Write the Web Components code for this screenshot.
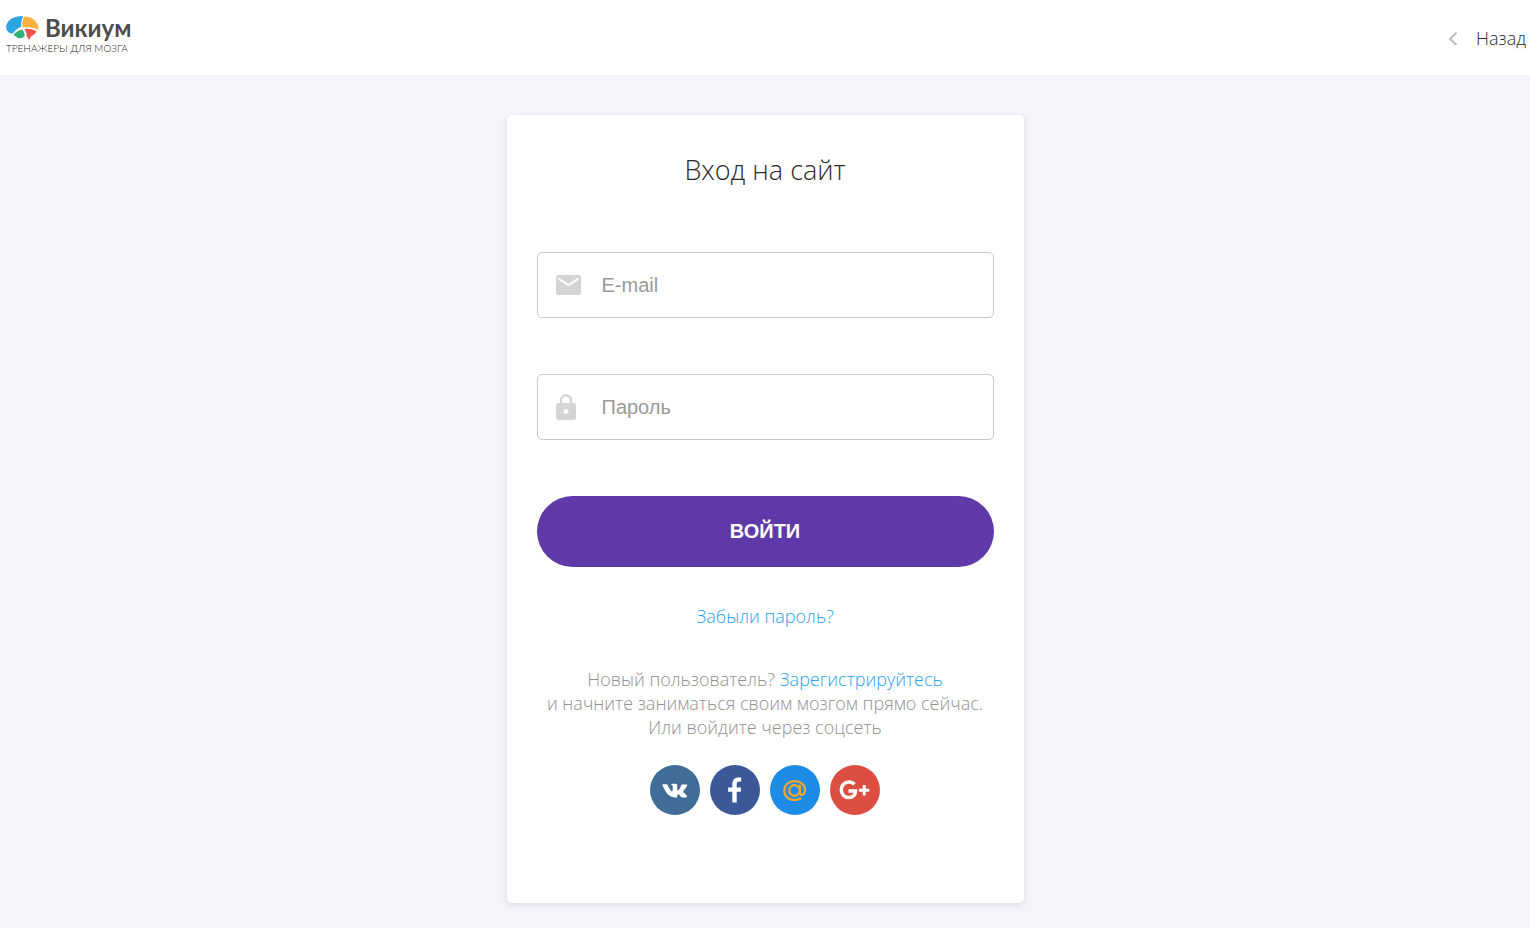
<!DOCTYPE html>
<html lang="ru">
<head>
<meta charset="utf-8">
<meta name="viewport" content="width=device-width, initial-scale=1">
<title>Викиум — вход на сайт</title>
<style>
  html { min-height: 100%; background: #f6f4fa; }
  body { margin: 0; font-family: "Open Sans", "Noto Sans", sans-serif; font-weight: 350; font-size: 18px; color: #2b2b2b; }
</style>
</head>
<body>
<wk-page>
  <wk-header slot="header"></wk-header>
  <wk-login-card></wk-login-card>
</wk-page>
<script>
  class Base extends HTMLElement {
    constructor() {
      super();
      this.attachShadow({ mode: 'open' });
    }
    connectedCallback() {
      this.shadowRoot.innerHTML = `<style>*{box-sizing:border-box}${this.css()}</style>${this.html()}`;
    }
  }

  customElements.define('wk-logo', class extends Base {
    css() { return `
      :host { display: block; }
      a { display: block; color: #4d4d4d; text-decoration: none; white-space: nowrap; }
      .top { display: flex; align-items: center; gap: 6px; height: 28px; }
      svg { display: block; width: 33px; height: 24px; }
      .name { font: 700 24px/28px Lato, sans-serif; }
      .tag { display: block; font: 300 10px/12px Lato, sans-serif; color: #222; }
    `; }
    html() { return `
      <a href="#">
        <span class="top">
          <svg viewBox="0 0 33 24" aria-hidden="true">
            <path fill="#2aa5e0" d="M17.500 0.500C15.500 3 15 7 15.300 10.500C12 11.700 9.400 14.200 7.200 17C5.500 18.300 .8 16.500 .2 12C-.4 5.600 7 -1 17.500 .500Z"/>
            <path fill="#fbb040" d="M18.500.500C26 .200 32 5.600 32.500 12.300C32.500 13.600 31.800 13.900 30.600 13.300C26.500 11.300 22 11.200 16.500 11.400C16.100 7.500 16.300 3 18.500.500Z"/>
            <path fill="#33b07a" d="M8 18.300C9.500 16 13 13.900 16.300 13.400C18 15.700 19 18 18.500 20.300C16.500 22.500 13.800 22.600 11.500 22C11 20.500 9.700 20.200 8.500 20.200Z"/>
            <path fill="#ef5350" d="M18.300 12.900C22.500 12.200 27.500 13 30.300 15.200C29.800 17.700 27 19.300 25 20.300L23.300 23.800C21.500 22.800 21.800 21.500 20.700 20C20.800 17.200 19.500 14.800 18.300 12.900Z"/>
          </svg>
          <span class="name">Викиум</span>
        </span>
        <span class="tag">ТРЕНАЖЕРЫ ДЛЯ МОЗГА</span>
      </a>`; }
  });

  customElements.define('wk-header', class extends Base {
    css() { return `
      :host { display: block; background: #fff; }
      header { display: flex; justify-content: space-between; height: 75px; padding: 14px 4px 0 6px; }
      .back { display: flex; align-items: center; gap: 18px; height: 48px; color: #2b2b2b; text-decoration: none; font-size: 18px; }
      svg { display: block; width: 10px; height: 14px; }
    `; }
    html() { return `
      <header>
        <wk-logo></wk-logo>
        <a class="back" href="#"><svg viewBox="0 0 10 14" aria-hidden="true"><path d="M8.500 1.500L2 8l6.500 6" fill="none" stroke="#bdbdbd" stroke-width="2"/></svg><span>Назад</span></a>
      </header>`; }
  });

  customElements.define('wk-page', class extends Base {
    css() { return `
      :host { display: block; }
      main { padding: 40px 16px 25px; }
    `; }
    html() { return `<slot name="header"></slot><main><slot></slot></main>`; }
  });

  const fieldIcons = {
    mail: `<svg width="25" height="20" viewBox="0 0 25 20"><path fill="#d4d4d4" d="M2.500 0h20A2.500 2.500 0 0 1 25 2.500v15a2.500 2.500 0 0 1-2.500 2.500h-20A2.500 2.500 0 0 1 0 17.500v-15A2.500 2.500 0 0 1 2.500 0ZM22.500 5V2.500l-10 6.300-10-6.300V5l10 6.200Z"/></svg>`,
    lock: `<svg width="20" height="26" viewBox="0 0 20 26"><path fill="#d4d4d4" fill-rule="evenodd" d="M3.800 9V6.200a6.200 6.200 0 0 1 12.400 0V9h1.300A2.500 2.500 0 0 1 20 11.500v12a2.500 2.500 0 0 1-2.500 2.500h-15A2.500 2.500 0 0 1 0 23.500v-12A2.500 2.500 0 0 1 2.500 9ZM6.200 9h7.600V6.200a3.800 3.800 0 0 0-7.600 0ZM10 15a2.500 2.500 0 1 0 0 5 2.500 2.500 0 0 0 0-5Z"/></svg>`
  };

  customElements.define('wk-field', class extends Base {
    css() { return `
      :host { display: block; }
      label { display: grid; grid-template-columns: 46px 1fr; align-items: center; height: 66px; padding: 0 18px; border: 1px solid #c9c9c9; border-radius: 5px; background: #fff; }
      svg { display: block; }
      input { width: 100%; height: 60px; padding: 0; border: 0; outline: 0; background: none; color: #2b2b2b; font: 400 20px "Liberation Sans", Arial, sans-serif; }
      input::placeholder { color: #999; opacity: 1; }
    `; }
    html() {
      const name = this.getAttribute('label');
      return `<label>${fieldIcons[this.getAttribute('icon')]}<input type="${this.getAttribute('type')}" placeholder="${name}" aria-label="${name}"></label>`;
    }
  });

  const socialIcons = {
    vk: `<path fill="#fff" transform="translate(2.300 2.300) scale(.92)" d="M24.600 32.800h1.600s.5-.1.700-.300c.2-.2.200-.7.200-.7s0-2.100.9-2.400c1-.3 2.200 2 3.500 2.900 1 .7 1.800.5 1.800.5l3.500 0s1.800-.1.900-1.500c-.1-.1-.5-1-2.600-3-2.200-2-1.900-1.700.8-5.200 1.600-2.200 2.300-3.500 2.100-4.100-.2-.5-1.500-.4-1.500-.4l-3.900 0s-.3 0-.5.100c-.2.100-.4.400-.4.400s-.6 1.700-1.400 3.100c-1.700 2.900-2.400 3-2.700 2.900-.7-.4-.5-1.700-.5-2.600 0-2.900.4-4.100-.9-4.400-.4-.1-.7-.200-1.800-.200-1.400 0-2.500 0-3.200.3-.4.200-.8.700-.6.700.3 0 .9.200 1.200.6.500.6.400 2.100.4 2.100s.3 4-.6 4.500c-.6.300-1.500-.3-3.300-3.500-.9-1.600-1.600-3.400-1.600-3.400s-.1-.3-.4-.5c-.3-.2-.7-.3-.7-.3l-3.700 0s-.6 0-.8.300c-.2.200 0 .7 0 .7s2.900 6.900 6.200 10.300c3 3.200 6.500 3 6.500 3Z"/>`,
    fb: `<path fill="#fff" d="M22.300 37.500V26.800h-4.200v-4.300h4.200v-3.300c0-4.300 2.300-6.800 6.200-6.800h2.700v4h-1.900c-2 0-2.600 1-2.600 2.600v3.500h4.200v4.300h-4.200v10.700Z"/>`,
    mail: `<g fill="none" stroke="#f9a72b" stroke-width="2.200" stroke-linecap="round"><circle cx="24.500" cy="25.500" r="5.300"/><path d="M29.800 20.500v6.300c0 4.900 5.200 3.800 5.200-2 0-5-4.300-8.700-10.200-8.700-6 0-10.500 4-10.500 9.400 0 5.800 4.300 9.500 10.300 9.500 2.300 0 4-.5 5.700-1.500"/></g>`,
    gp: `<path fill="none" stroke="#fff" stroke-width="3.500" d="M24.500 19.200c-1.500-1.600-3.600-2.300-5.700-2.200-4.200 0-7.500 3.400-7.500 7.700 0 4.500 3.200 7.900 7.500 7.900 4.200 0 6.600-2.600 6.700-6.500h-7"/><path fill="none" stroke="#fff" stroke-width="3" d="M34.200 20v10.500M29 25.200h10.300"/>`
  };

  customElements.define('wk-social', class extends Base {
    css() { return `
      :host { display: block; }
      a { display: block; width: 50px; height: 50px; border-radius: 50%; background: ${this.getAttribute('color')}; }
      svg { display: block; }
    `; }
    html() { return `<a href="#" aria-label="${this.getAttribute('label')}"><svg width="50" height="50" viewBox="0 0 50 50" aria-hidden="true">${socialIcons[this.getAttribute('icon')]}</svg></a>`; }
  });

  customElements.define('wk-login-card', class extends Base {
    css() { return `
      :host { display: block; max-width: 517px; margin: 0 auto; background: #fff; border-radius: 5px; box-shadow: 0 2px 6px rgba(60, 50, 90, .14); }
      section { padding: 35px 30px 88px; text-align: center; }
      h1 { margin: 0 0 62px; font-size: 27px; line-height: 40px; font-weight: 350; }
      form { display: grid; gap: 56px; }
      button { height: 71px; border: 0; border-radius: 36px; background: #6039a9; color: #fff; font: 700 20px "Liberation Sans", Arial, sans-serif; cursor: pointer; }
      a { color: #29a3eb; text-decoration: none; }
      p { margin: 0; color: #919191; font-size: 18px; line-height: 24px; }
      .forgot { margin: 37px 0 39px; }
      .social { display: flex; justify-content: center; gap: 10px; margin-top: 26px; }
    `; }
    html() { return `
      <section>
        <h1>Вход на сайт</h1>
        <form>
          <wk-field icon="mail" type="email" label="E-mail"></wk-field>
          <wk-field icon="lock" type="password" label="Пароль"></wk-field>
          <button type="button">ВОЙТИ</button>
        </form>
        <p class="forgot"><a href="#">Забыли пароль?</a></p>
        <p>Новый пользователь? <a href="#">Зарегистрируйтесь</a><br>и начните заниматься своим мозгом прямо сейчас.<br>Или войдите через соцсеть</p>
        <nav class="social" aria-label="Вход через соцсети">
          <wk-social icon="vk" color="#3f6d98" label="ВКонтакте"></wk-social>
          <wk-social icon="fb" color="#3b5998" label="Facebook"></wk-social>
          <wk-social icon="mail" color="#1e8ce6" label="Mail.ru"></wk-social>
          <wk-social icon="gp" color="#dc4e41" label="Google+"></wk-social>
        </nav>
      </section>`; }
  });
</script>
</body>
</html>
